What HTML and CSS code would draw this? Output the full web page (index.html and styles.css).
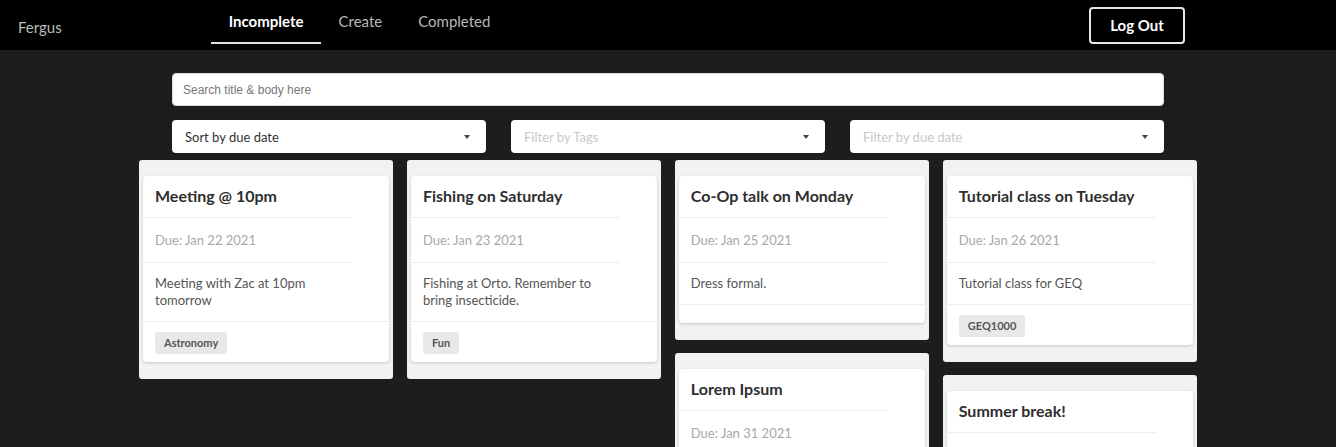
FILE: index.html
```html
<!DOCTYPE html>
<html lang="en">
<head>
<meta charset="utf-8">
<title>Fergus</title>
<link rel="stylesheet" href="styles.css">
</head>
<body>
<header class="navbar">
  <div class="brand">Fergus</div>
  <nav class="nav-links">
    <a class="nav-link active" href="#">Incomplete</a>
    <a class="nav-link" href="#">Create</a>
    <a class="nav-link" href="#">Completed</a>
  </nav>
  <button class="logout">Log Out</button>
</header>
<main class="main">
  <div class="controls">
    <input class="search" type="text" placeholder="Search title &amp; body here">
    <div class="filters">
      <div class="select"><span class="value">Sort by due date</span><span class="caret"></span></div>
      <div class="select"><span class="placeholder">Filter by Tags</span><span class="caret"></span></div>
      <div class="select"><span class="placeholder">Filter by due date</span><span class="caret"></span></div>
    </div>
  </div>
  <div class="board">
    <div class="column">
      <div class="card-wrap">
        <div class="card">
          <div class="sec head">Meeting @ 10pm</div>
          <div class="sec due">Due: Jan 22 2021</div>
          <div class="body">Meeting with Zac at 10pm tomorrow</div>
          <div class="foot"><span class="tag">Astronomy</span></div>
        </div>
      </div>
    </div>
    <div class="column">
      <div class="card-wrap">
        <div class="card">
          <div class="sec head">Fishing on Saturday</div>
          <div class="sec due">Due: Jan 23 2021</div>
          <div class="body">Fishing at Orto. Remember to bring insecticide.</div>
          <div class="foot"><span class="tag">Fun</span></div>
        </div>
      </div>
    </div>
    <div class="column">
      <div class="card-wrap">
        <div class="card">
          <div class="sec head">Co-Op talk on Monday</div>
          <div class="sec due">Due: Jan 25 2021</div>
          <div class="body">Dress formal.</div>
          <div class="foot"></div>
        </div>
      </div>
      <div class="card-wrap">
        <div class="card">
          <div class="sec head">Lorem Ipsum</div>
          <div class="sec due">Due: Jan 31 2021</div>
          <div class="body">Lorem ipsum dolor sit amet, consectetur adipiscing elit.</div>
          <div class="foot"></div>
        </div>
      </div>
    </div>
    <div class="column">
      <div class="card-wrap">
        <div class="card">
          <div class="sec head">Tutorial class on Tuesday</div>
          <div class="sec due">Due: Jan 26 2021</div>
          <div class="body">Tutorial class for GEQ</div>
          <div class="foot"><span class="tag">GEQ1000</span></div>
        </div>
      </div>
      <div class="card-wrap">
        <div class="card">
          <div class="sec head">Summer break!</div>
          <div class="sec due">Due: Feb 01 2021</div>
          <div class="body">Enjoy the break.</div>
          <div class="foot"></div>
        </div>
      </div>
    </div>
  </div>
</main>
</body>
</html>
```
FILE: styles.css
```css
* { box-sizing: border-box; }
html, body { margin: 0; padding: 0; }
body {
  background: #1d1d1f;
  font-family: Lato, "Open Sans", sans-serif;
  overflow: hidden;
}
.navbar {
  height: 50px;
  background: #000;
  display: flex;
  align-items: center;
}
.brand {
  color: #bdbdbd;
  font-size: 15px;
  margin-left: 18px;
  padding-top: 3px;
}
.nav-links {
  display: flex;
  margin-left: 149px;
  align-self: stretch;
}
.nav-link {
  color: #b8b8b8;
  font-size: 15px;
  text-decoration: none;
  padding: 12px 18px 0;
  height: 44px;
  border-bottom: 2px solid transparent;
}
.nav-link.active {
  color: #fff;
  font-weight: 700;
  border-bottom-color: #e0e0e0;
  padding-right: 17px;
}
.logout {
  margin-left: auto;
  margin-right: 151px;
  width: 96px;
  height: 37px;
  background: #000;
  color: #fff;
  border: 2px solid #e6e6e6;
  border-radius: 4px;
  font-family: Lato, sans-serif;
  font-weight: 700;
  font-size: 15px;
}
.main {
  display: flex;
  flex-direction: column;
  align-items: center;
}
.controls {
  width: 992px;
  padding-top: 23px;
}
.search {
  display: block;
  width: 100%;
  height: 33px;
  border: 1px solid #ddd;
  border-radius: 4px;
  padding: 0 10px;
  font-family: "Liberation Sans", Arial, sans-serif;
  font-size: 12px;
  background: #fff;
  outline: none;
}
.search::placeholder { color: #777; }
.filters {
  display: grid;
  grid-template-columns: repeat(3, 1fr);
  gap: 25px;
  margin-top: 14px;
}
.select {
  height: 33px;
  background: #fff;
  border-radius: 4px;
  display: flex;
  align-items: center;
  padding: 0 13px;
  font-size: 13px;
}
.select .value { color: #333; }
.select .placeholder { color: #c8c8c8; }
.caret {
  margin-left: auto;
  width: 0;
  height: 0;
  border-left: 3.5px solid transparent;
  border-right: 3.5px solid transparent;
  border-top: 4px solid #444;
  margin-right: 3px;
}
.board {
  width: 1058px;
  display: grid;
  grid-template-columns: repeat(4, 1fr);
  column-gap: 13.67px;
  margin-top: 7px;
  align-items: start;
}
.column {
  display: flex;
  flex-direction: column;
  gap: 13px;
}
.card-wrap {
  background: #f2f2f2;
  border-radius: 3px;
  padding: 16px 4px 17px;
}
.card {
  background: #fff;
  border-radius: 4px;
  box-shadow: 0 1px 3px rgba(0,0,0,0.18);
}
.sec {
  width: 85%;
  padding: 0 12px;
  border-bottom: 1px solid #eeeeee;
}
.head {
  font-weight: 700;
  font-size: 16px;
  color: #2e2e2e;
  height: 42px;
  line-height: 40px;
}
.due {
  font-size: 13px;
  color: #a8a8a8;
  height: 45px;
  line-height: 44px;
}
.body {
  padding: 12px calc(15% + 12px) 12px 12px;
  font-size: 13px;
  line-height: 17px;
  color: #555;
}
.foot {
  border-top: 1px solid #eeeeee;
  padding: 10px 12px 8px;
  min-height: 19px;
}
.tag {
  display: inline-block;
  background: #e8e8e8;
  color: #555;
  font-size: 11px;
  font-weight: 700;
  border-radius: 3px;
  padding: 0 9px;
  height: 22px;
  line-height: 22px;
  vertical-align: top;
}
```
